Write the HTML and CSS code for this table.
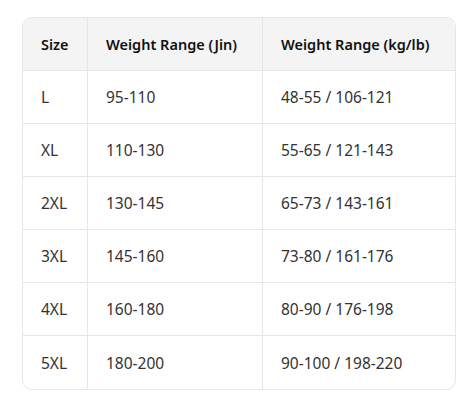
FILE: index.html
```html
<!DOCTYPE html>
<html>
<head>
<meta charset="utf-8">
<link rel="stylesheet" href="styles.css">
</head>
<body>
<div class="wrap">
  <table class="size-table">
    <thead>
      <tr><th class="c1">Size</th><th class="c2">Weight Range (Jin)</th><th class="c3">Weight Range (kg/lb)</th></tr>
    </thead>
    <tbody>
      <tr><td>L</td><td>95-110</td><td>48-55 / 106-121</td></tr>
      <tr><td>XL</td><td>110-130</td><td>55-65 / 121-143</td></tr>
      <tr><td>2XL</td><td>130-145</td><td>65-73 / 143-161</td></tr>
      <tr><td>3XL</td><td>145-160</td><td>73-80 / 161-176</td></tr>
      <tr><td>4XL</td><td>160-180</td><td>80-90 / 176-198</td></tr>
      <tr><td>5XL</td><td>180-200</td><td>90-100 / 198-220</td></tr>
    </tbody>
  </table>
</div>
</body>
</html>
```
FILE: styles.css
```css
html, body { margin: 0; padding: 0; background: #fff; }
body { font-family: "Noto Sans", "Open Sans", sans-serif; }
.wrap { padding: 17px 13px 0 22px; }
.size-table {
  width: 434px;
  border-collapse: separate;
  border-spacing: 0;
  border: 1px solid #e6e6e6;
  border-radius: 10px;
  overflow: hidden;
  table-layout: fixed;
}
.c1 { width: 65px; }
.c2 { width: 175px; }
th, td {
  height: 53px;
  padding: 0 0 0 18px;
  text-align: left;
  vertical-align: middle;
  box-sizing: border-box;
  font-size: 15.5px;
  border-right: 1px solid #e6e6e6;
  border-bottom: 1px solid #e6e6e6;
}
th:last-child, td:last-child { border-right: none; }
tbody tr:last-child td { border-bottom: none; }
th {
  background: #f4f4f4;
  font-weight: 600;
  font-size: 14.5px;
  color: #111;
}
td { color: #333; }
```
